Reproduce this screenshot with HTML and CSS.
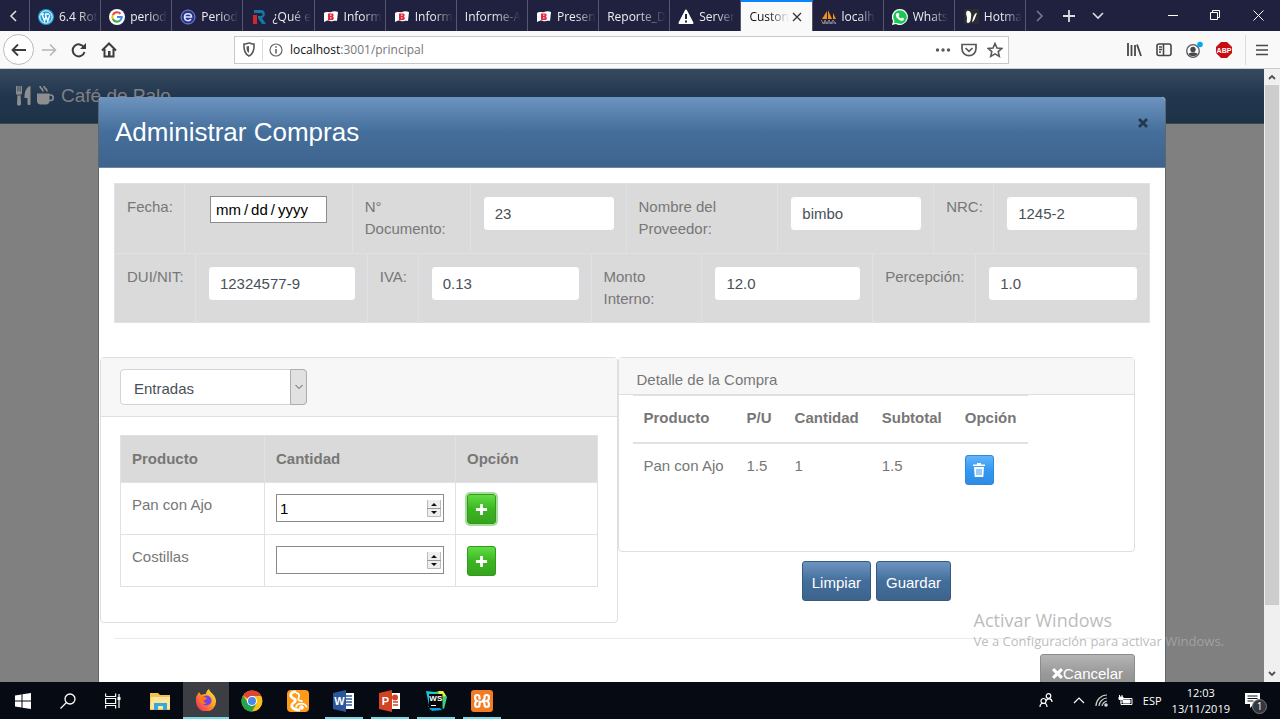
FILE: index.html
```html
<!DOCTYPE html>
<html lang="es">
<head>
<meta charset="utf-8">
<title>Administrar Compras</title>
<link rel="stylesheet" href="styles.css">
</head>
<body>
<svg class="defs" aria-hidden="true">
  <symbol id="b-flag" viewBox="0 0 16 16"><path d="M1 4c3-2 5 0 7-1s5-1 7 0l-1 9c-3-1-5 1-7 0s-4 0-6 1z" fill="#fff"/><path d="M5 4.500h4c2 0 2 2.500.8 3.200C11.500 8.500 11 11 9 11H5z" fill="#e8273f"/><path d="M7 6.200h1.500M7 8.900h1.500" stroke="#fff"/></symbol>
  <symbol id="plus" viewBox="0 0 14 14"><path d="M7 1v12M1 7h12" stroke="#fff" stroke-width="3"/></symbol>
  <symbol id="cross" viewBox="0 0 10 10"><path d="M1 1l8 8M9 1l-8 8" stroke="currentColor" stroke-width="2.800"/></symbol>
  <symbol id="spin" viewBox="0 0 14 17"><path d="M.5 0v16.500h13V0" fill="#eee" stroke="#bbb"/><path d="M0 8.500h14" stroke="#999"/><path d="M4 6l3-3 3 3zM4 11l3 3 3-3z" fill="#111"/></symbol>
</svg>

<nav class="tabs">
  <button class="tab-scroll" aria-label="Anterior"><svg width="8" height="12" viewBox="0 0 8 12"><path d="M7 1L2 6l5 5" fill="none" stroke="#ddd" stroke-width="1.600"/></svg></button>
  <div class="tab-list">
    <button class="tab"><svg class="fav" viewBox="0 0 16 16"><circle cx="8" cy="8" r="8" fill="#1e9fd6"/><circle cx="8" cy="8" r="6.200" fill="none" stroke="#fff"/><path d="M3 5h3M7 5h4M4 5l2.500 7L8 7.500 9.800 12 12 5.500M8 7.500L7.300 5" fill="none" stroke="#fff" stroke-width="1.400"/></svg><span>6.4 Rot</span></button>
    <button class="tab"><svg class="fav" viewBox="0 0 16 16"><circle cx="8" cy="8" r="8" fill="#fff"/><g fill="none" stroke-width="2"><path d="M11.500 4.800A4.700 4.700 0 0 0 3.800 6" stroke="#ea4335"/><path d="M3.800 6a4.700 4.700 0 0 0 0 4" stroke="#fbbc05"/><path d="M3.800 10a4.700 4.700 0 0 0 7.300 1.500" stroke="#34a853"/><path d="M11.100 11.500A4.700 4.700 0 0 0 12.700 8H8" stroke="#4285f4"/></g></svg><span>period</span></button>
    <button class="tab"><svg class="fav" viewBox="0 0 16 16"><circle cx="8" cy="8" r="7" fill="#27358c" stroke="#7c8cd2"/><path d="M4.500 8h7c0-4.500-7-4.500-7 0s5 4.500 6.500 2" fill="none" stroke="#dfe4ff" stroke-width="1.500"/></svg><span>Period</span></button>
    <button class="tab"><svg class="fav" viewBox="0 0 16 16"><path d="M3 1h7c5 0 5 7 1 8l4 6h-4L7 9V7h3c2 0 2-3 0-3H3z" fill="#1678a0"/><path d="M2 6h4v9H2z" fill="#d3242f"/></svg><span>¿Qué e</span></button>
    <button class="tab"><svg class="fav"><use href="#b-flag"/></svg><span>Inform</span></button>
    <button class="tab"><svg class="fav"><use href="#b-flag"/></svg><span>Inform</span></button>
    <button class="tab"><span>Informe-A</span></button>
    <button class="tab"><svg class="fav"><use href="#b-flag"/></svg><span>Presen</span></button>
    <button class="tab"><span>Reporte_D</span></button>
    <button class="tab"><svg class="fav" viewBox="0 0 16 16"><path d="M8 1.500L1.500 14h13z" fill="#fff" stroke="#fff" stroke-width="2" stroke-linejoin="round"/><path d="M8 5v5M8 11.500v2" stroke="#20213f" stroke-width="2"/></svg><span>Server</span></button>
    <button class="tab active"><span>Custon</span><svg class="tab-close" viewBox="0 0 10 10"><path d="M1 1l8 8M9 1L1 9" stroke="#333" stroke-width="1.300"/></svg></button>
    <button class="tab"><svg class="fav" viewBox="0 0 16 16"><path d="M1 10L6 2v8zM7 10V1l4 9zM12 10V4l3 6z" fill="#f29111"/><path d="M0 11l3 4 1-4 2 4 2-4 2 4 2-4 3 4M1 14h14" fill="none" stroke="#8a8a91"/></svg><span>localh</span></button>
    <button class="tab"><svg class="fav" viewBox="0 0 16 16"><path d="M8 0a8 8 0 1 1-4 15L0 16l1-4A8 8 0 0 1 8 0z" fill="#fff"/><path d="M8 1.200a6.800 6.800 0 1 1-3.700 12.500l-2.500.6.700-2.400A6.800 6.800 0 0 1 8 1.200z" fill="#1bc854"/><path d="M5 4l1.500 0 1 2-1 1c.5 1.200 1.300 2 2.600 2.500l1-1 2 1c0 2-1.600 2.600-3 2.200C6.500 11 4.500 9 4 7 3.800 5.500 4.300 4.500 5 4z" fill="#fff"/></svg><span>Whats</span></button>
    <button class="tab"><svg class="fav" viewBox="0 0 16 16"><path d="M1 0h15v15H1z" fill="#2d2d30"/><path d="M4 2c3-1 5 3 4 6 0 3-1 6-3 6s-1-3-1-5-2-5 0-7zM14 4c-2 0-3 2-4 5l-1 4c2 0 3-4 5-9z" fill="#fff"/></svg><span>Hotma</span></button>
  </div>
  <div class="tab-tools">
    <button aria-label="Siguiente"><svg width="8" height="12" viewBox="0 0 8 12"><path d="M1 1l5 5-5 5" fill="none" stroke="#77788e" stroke-width="1.600"/></svg></button>
    <button aria-label="Nueva pestaña"><svg width="14" height="14" viewBox="0 0 14 14"><path d="M7 1v12M1 7h12" stroke="#ddd" stroke-width="1.800"/></svg></button>
    <button aria-label="Lista de pestañas"><svg width="12" height="8" viewBox="0 0 12 8"><path d="M1 1l5 5 5-5" fill="none" stroke="#ddd" stroke-width="1.600"/></svg></button>
  </div>
  <div class="win-tools">
    <button aria-label="Minimizar"><svg width="10" height="10"><path d="M0 4.500h10" stroke="#fff"/></svg></button>
    <button aria-label="Restaurar"><svg width="11" height="11" fill="none" stroke="#fff"><path d="M.5 2.500h7v7h-7zM2.500 2.500v-2h7v7h-2"/></svg></button>
    <button aria-label="Cerrar"><svg width="11" height="11"><path d="M.5.5l10 10M10.500.5l-10 10" stroke="#fff"/></svg></button>
  </div>
</nav>

<header class="toolbar">
  <button class="back" aria-label="Atrás"><svg width="16" height="14" viewBox="0 0 16 14"><path d="M15 7H2M7 1.500L1.500 7 7 12.500" fill="none" stroke="#3c3c40" stroke-width="1.800"/></svg></button>
  <button aria-label="Adelante"><svg width="16" height="14" viewBox="0 0 16 14"><path d="M1 7h13M9 1.500L14.500 7 9 12.500" fill="none" stroke="#b5b5b8" stroke-width="1.500"/></svg></button>
  <button aria-label="Recargar"><svg width="16" height="16" viewBox="0 0 16 16"><path d="M13 5.500A6 6 0 1 0 13.500 10" fill="none" stroke="#3c3c40" stroke-width="2"/><path d="M15 1v6H9z" fill="#3c3c40"/></svg></button>
  <button aria-label="Inicio"><svg width="16" height="16" viewBox="0 0 16 16"><path d="M1 8.500L8 1.500l7 7M3.500 7v7.500h9V7" fill="none" stroke="#3c3c40" stroke-width="2"/><path d="M7 9h2.500v5H7z" fill="#3c3c40"/></svg></button>
  <div class="url">
    <svg width="14" height="15" viewBox="0 0 14 15"><path d="M2 2c3 0 3-1 5-1s2 1 5 1c.5 6-1 10-5 12C3 12 1.500 8 2 2z" fill="none" stroke="#58585c" stroke-width="1.600"/><path d="M7 4v7C4.500 9.500 4.500 7 4.500 4.500z" fill="#58585c"/></svg>
    <i class="url-line"></i>
    <svg width="14" height="14" viewBox="0 0 14 14"><circle cx="7" cy="7" r="6" fill="none" stroke="#68686c" stroke-width="1.200"/><path d="M7 6v4.500M7 3.300v1.500" stroke="#58585c" stroke-width="1.500"/></svg>
    <span class="address">localhost<em>:3001/principal</em></span>
    <svg width="16" height="16" viewBox="0 0 16 16" fill="#58585c"><circle cx="2.500" cy="8" r="1.700"/><circle cx="8" cy="8" r="1.700"/><circle cx="13.500" cy="8" r="1.700"/></svg>
    <svg width="16" height="14" viewBox="0 0 16 14" fill="none" stroke="#58585c" stroke-width="1.700"><path d="M1 1.500h14v4C15 15 1 15 1 5.500zM4.500 5L8 8.300 11.500 5"/></svg>
    <svg width="16" height="16" viewBox="0 0 16 16"><path d="M8 1.500l2 4.500 4.800.4-3.600 3.200 1.100 4.800L8 11.900l-4.300 2.500 1.100-4.800L1.200 6.400 6 6z" fill="none" stroke="#58585c" stroke-width="1.600"/></svg>
  </div>
  <div class="extras">
    <button aria-label="Biblioteca"><svg width="16" height="14" viewBox="0 0 16 14"><path d="M2 0v13M5.500 2v11M9 2v11M11 1.500l4 11.500" stroke="#48484c" stroke-width="1.800"/></svg></button>
    <button aria-label="Barra lateral"><svg width="16" height="14" viewBox="0 0 16 14" fill="none" stroke="#48484c" stroke-width="1.600"><rect x="1" y="1" width="14" height="11.500" rx="2"/><path d="M7.500 1v11.500M3 4h3M3 6.500h3M3 9h2"/></svg></button>
    <button aria-label="Cuenta"><svg width="18" height="18" viewBox="0 0 18 18"><circle cx="8" cy="10" r="6.300" fill="none" stroke="#58585c" stroke-width="1.300"/><circle cx="8" cy="8.500" r="2.700" fill="#48484c"/><path d="M3.500 13c1-2 8-2 9 0-2 3-7 3-9 0z" fill="#48484c"/><circle cx="15" cy="3.500" r="2.800" fill="#00a8f8"/></svg></button>
    <button aria-label="Adblock Plus"><svg width="16" height="16" viewBox="0 0 16 16"><path d="M5 0h6l5 5v6l-5 5H5l-5-5V5z" fill="#c70d12"/><text x="8" y="10.500" text-anchor="middle" class="abp">ABP</text></svg></button>
    <button class="menu" aria-label="Menú"><svg width="12" height="12"><path d="M0 1.500h12M0 6h12M0 10.500h12" stroke="#48484c" stroke-width="1.700"/></svg></button>
  </div>
</header>

<main class="viewport">
  <div class="page">
    <div class="navbar">
      <svg width="40" height="22" viewBox="0 0 40 22"><path d="M1 1v6.500c0 2 1 3 2.800 3S7 9.500 7 7.500V1H5.600v5.500h-.9V1H3.400v5.500h-.9V1zM2.500 9.500h3L6 19c0 2-4 2-4 0zM15.500 1v18c0 1.600-3 1.600-3 0v-6H9.500C9.500 7 11 2 15.500 1z" fill="#8e8e8e"/><path d="M22 8.500h12.500V16c0 2-1.500 3.500-3.500 3.500h-5.500c-2 0-3.500-1.500-3.500-3.500z" fill="#8e8e8e"/><path d="M34 10h1.800c3.200 0 3.200 5.500 0 5.500H34M25 1c0 3 3 2 3 5.500M29 1c0 3 3 2 3 5.500" fill="none" stroke="#8e8e8e" stroke-width="1.600"/></svg>
      <a class="brand" href="#">Café de Palo</a>
    </div>
    <section class="modal" role="dialog" aria-labelledby="title">
      <header class="modal-head">
        <h1 id="title">Administrar Compras</h1>
        <button class="close" aria-label="Cerrar"><svg width="10" height="10"><use href="#cross"/></svg></button>
      </header>
      <div class="modal-body">
        <form class="data">
          <div class="data-row first">
            <label for="fecha">Fecha:</label><div class="cell date-cell"><input class="date" id="fecha" type="date" lang="en-US"></div>
            <label for="doc">N°<br>Documento:</label><div class="cell"><input class="field" id="doc" type="text" value="23"></div>
            <label for="prov">Nombre del<br>Proveedor:</label><div class="cell"><input class="field" id="prov" type="text" value="bimbo"></div>
            <label for="nrc">NRC:</label><div class="cell"><input class="field" id="nrc" type="text" value="1245-2"></div>
          </div>
          <div class="data-row second">
            <label for="dui">DUI/NIT:</label><div class="cell"><input class="field" id="dui" type="text" value="12324577-9"></div>
            <label for="iva">IVA:</label><div class="cell"><input class="field" id="iva" type="text" value="0.13"></div>
            <label for="monto">Monto<br>Interno:</label><div class="cell"><input class="field" id="monto" type="text" value="12.0"></div>
            <label for="perc">Percepción:</label><div class="cell"><input class="field" id="perc" type="text" value="1.0"></div>
          </div>
        </form>

        <div class="cards">
          <section class="card products">
            <div class="card-head">
              <div class="picker"><select aria-label="Categoría"><option>Entradas</option></select><span class="picker-arrow"><svg width="8" height="6"><path d="M.5 1L4 4.500 7.500 1" fill="none" stroke="#555"/></svg></span></div>
            </div>
            <div class="card-body">
              <table class="grid">
                <thead><tr><th class="c-prod">Producto</th><th class="c-qty">Cantidad</th><th>Opción</th></tr></thead>
                <tbody>
                  <tr><td>Pan con Ajo</td><td><div class="number"><input type="number" value="1" aria-label="Cantidad de Pan con Ajo"><svg width="14" height="17"><use href="#spin"/></svg></div></td><td><button class="btn add focus" aria-label="Agregar Pan con Ajo"><svg width="13" height="13"><use href="#plus"/></svg></button></td></tr>
                  <tr><td>Costillas</td><td><div class="number"><input type="number" aria-label="Cantidad de Costillas"><svg width="14" height="17"><use href="#spin"/></svg></div></td><td><button class="btn add" aria-label="Agregar Costillas"><svg width="13" height="13"><use href="#plus"/></svg></button></td></tr>
                </tbody>
              </table>
            </div>
          </section>
          <div class="detail">
            <section class="card summary">
              <h2 class="card-title">Detalle de la Compra</h2>
              <table class="lines">
                <thead><tr><th>Producto</th><th>P/U</th><th>Cantidad</th><th>Subtotal</th><th>Opción</th></tr></thead>
                <tbody><tr><td>Pan con Ajo</td><td>1.5</td><td>1</td><td>1.5</td><td><button class="btn remove" aria-label="Eliminar"><svg width="12" height="14" viewBox="0 0 12 14"><path d="M0 1.500h4V0h4v1.500h4V3H0zM1 4h10l-.7 10H1.700z" fill="#fff"/><path d="M4 6v6M6 6v6M8 6v6" stroke="#3399f3"/></svg></button></td></tr></tbody>
              </table>
            </section>
            <div class="actions"><button class="btn primary">Limpiar</button><button class="btn primary">Guardar</button></div>
          </div>
        </div>
        <footer class="modal-foot"><button class="btn cancel"><svg width="11" height="11"><use href="#cross"/></svg>Cancelar</button></footer>
      </div>
    </section>
  </div>
  <div class="scrollbar">
    <svg width="8" height="6"><path d="M1 5l3-3 3 3" fill="none" stroke="#505050" stroke-width="1.800"/></svg>
    <i class="thumb"></i><i class="rest"></i>
    <svg width="8" height="6"><path d="M1 1l3 3 3-3" fill="none" stroke="#505050" stroke-width="1.800"/></svg>
  </div>
  <div class="watermark"><strong>Activar Windows</strong><span>Ve a Configuración para activar Windows.</span></div>
</main>

<footer class="taskbar">
  <div class="apps">
    <button aria-label="Inicio"><svg width="16" height="16" viewBox="0 0 16 16" fill="#fff"><path d="M0 2.500l6.500-1v6H0zM7.500 1.300L16 0v7.500H7.500zM0 8.500h6.500v6L0 13.500zM7.500 8.500H16V16l-8.500-1.300z"/></svg></button>
    <button aria-label="Buscar"><svg width="16" height="16" viewBox="0 0 16 16" fill="none" stroke="#fff" stroke-width="1.300"><circle cx="10" cy="6" r="5"/><path d="M6.500 9.500L.5 15.500"/></svg></button>
    <button aria-label="Vista de tareas"><svg width="16" height="16" viewBox="0 0 16 16" fill="none" stroke="#fff" stroke-width="1.200"><path d="M.6 3.500v-3M.6 3.500h10v-3M.6 5.500h10v5H.6zM.6 15.500v-3h10v3M14 1v14"/><path d="M14 4v3" stroke-width="3"/></svg></button>
    <button class="files" aria-label="Explorador"><svg width="22" height="20" viewBox="0 0 22 20"><path d="M1 2h8l2 2h10v15H1z" fill="#f2c34e"/><path d="M2 6h19v12H1z" fill="#fee59a"/><path d="M5 19v-7h13v7h-4v-4H9v4z" fill="#35a8dc"/></svg></button>
    <button class="current" aria-label="Firefox"><svg width="22" height="22" viewBox="0 0 22 22"><defs><linearGradient id="fx" x1="1" y1="0" x2="0" y2="1"><stop offset="0" stop-color="#fff34d"/><stop offset=".45" stop-color="#ff9a1f"/><stop offset="1" stop-color="#f5156c"/></linearGradient></defs><path d="M1 8l3-5 2 3c2-1 3-1 5-1 0-2 1-4 3-5 1 4 7 6 7 12a10 10 0 0 1-20 1c0-2 0-3 0-5z" fill="url(#fx)"/><circle cx="11.500" cy="11.500" r="5" fill="#7542e5"/><path d="M5 8c3-1 5 0 7 1-1 2-3 2-4 3 1 1 2 1.500 3.500 1.500-1 2-4 2-5.500.5-1.500-1.500-2-4-1-6z" fill="#ff7a1a"/></svg></button>
    <button aria-label="Chrome"><svg width="22" height="22" viewBox="0 0 22 22"><circle cx="11" cy="11" r="10.500" fill="#fbc116"/><path d="M11 11L2 5.500A10.500 10.500 0 0 1 20.300 6H11z" fill="#df4536"/><path d="M2 5.500A10.500 10.500 0 0 0 11 21.500l4.500-8L7 13z" fill="#2aa14c"/><circle cx="11" cy="11" r="5" fill="#fff"/><circle cx="11" cy="11" r="4" fill="#4a87ee"/></svg></button>
    <button aria-label="UC Browser"><svg width="22" height="22" viewBox="0 0 22 22"><rect width="22" height="22" rx="4" fill="#ff9a17"/><path d="M9 2C5 1 2 5 5 7.500 7 9 10 9.500 7.500 12 5 14 4 15 5 17c1.500 2.500 4 3 8 3" fill="none" stroke="#fff" stroke-width="2.800"/><path d="M9 3c3 0 4 2.500 2.500 5-1 2 1 3 4 3M19.500 17.500c0-5-10-5.500-10.500 0" fill="none" stroke="#fff" stroke-width="1.800"/><circle cx="14.500" cy="17.500" r="2.300" fill="#fff"/></svg></button>
    <button class="open" aria-label="Word"><svg width="22" height="22" viewBox="0 0 22 22"><path d="M11 3h10v16H11z" fill="#fff"/><path d="M13 6h6M13 9h6M13 12h6M13 15h6" stroke="#2b579a" stroke-width="1.500"/><path d="M0 3l13-3v22L0 19z" fill="#2b579a"/><text class="office" x="6.500" y="15" text-anchor="middle">W</text></svg></button>
    <button class="open" aria-label="PowerPoint"><svg width="22" height="22" viewBox="0 0 22 22"><path d="M11 3h10v16H11z" fill="#fff"/><path d="M14 12h5M14 15h5" stroke="#d04424" stroke-width="1.500"/><circle cx="16" cy="7.500" r="3" fill="#d04424"/><path d="M0 3l13-3v22L0 19z" fill="#d04424"/><text class="office" x="6.500" y="15" text-anchor="middle">P</text></svg></button>
    <button class="open" aria-label="WebStorm"><svg width="22" height="22" viewBox="0 0 22 22"><path d="M1 1l9 1 4 8-9 10z" fill="#16c7da"/><path d="M9 2l9-1 4 6-3 12-8-4z" fill="#3bd17a"/><path d="M13 1l5 0 3 5-6 1z" fill="#f5ee3b"/><path d="M3 16l9-1 5 5-10 1z" fill="#0aa0df"/><path d="M4 4h13.500v14H4z" fill="#060606"/><text class="ws" x="10.800" y="11" text-anchor="middle">WS</text><path d="M6 15.500h5" stroke="#fff"/></svg></button>
    <button class="open" aria-label="XAMPP"><svg width="22" height="22" viewBox="0 0 22 22"><rect width="22" height="22" rx="3" fill="#f37b22"/><path d="M8.500 9.500V7.200a2.200 2.200 0 0 0-4.400 0V8c0 1.500.9 2.500 2.200 3-1.300.5-2.200 1.500-2.200 3v.8a2.200 2.200 0 0 0 4.400 0v-1c0-1.500 1-2.300 2.500-2.300s2.500.8 2.500 2.300v1a2.200 2.200 0 0 0 4.400 0V14c0-1.500-.9-2.500-2.200-3 1.300-.5 2.200-1.500 2.200-3v-.8a2.200 2.200 0 0 0-4.400 0v1c0 1.500-1 2.300-2.500 2.300" fill="none" stroke="#fff" stroke-width="2.200"/></svg></button>
  </div>
  <div class="tray">
    <svg width="14" height="15" viewBox="0 0 14 15" fill="none" stroke="#fff" stroke-width="1.200"><circle cx="9.500" cy="3" r="2.300"/><path d="M7 8c1-3 6-3 6 1"/><circle cx="4.500" cy="8" r="2.500"/><path d="M1 14c0-5 7-5 7 0"/></svg>
    <svg class="chevron" width="12" height="7" viewBox="0 0 12 7"><path d="M1 6l5-5 5 5" fill="none" stroke="#fff" stroke-width="1.200"/></svg>
    <svg width="13" height="13" viewBox="0 0 13 13" fill="none" stroke="#ccc" stroke-width="1.200"><path d="M1 12C1 6 6 1 12 1M4 12c0-4 4-8 8-8M7 12c0-2 3-5 5-5"/><circle cx="11" cy="11" r="1.200" fill="#fff"/></svg>
    <svg width="15" height="12" viewBox="0 0 15 12"><path d="M5 3.500h9v6H3v-3" fill="none" stroke="#fff"/><path d="M5 5h7v3H5zM1 2h4v2.500H1zM1.500 0v2M4 0v2M3 4v4" fill="#fff" stroke="#fff"/></svg>
    <span>ESP</span>
    <span class="clock">12:03<br>13/11/2019</span>
    <span class="notice"><svg width="16" height="15" viewBox="0 0 16 15"><path d="M0 0h15v11H9l-4 4v-4H0z" fill="#fff"/><path d="M2.500 3h10M2.500 5.500h10M2.500 8h6" stroke="#10131a"/></svg><b>1</b></span>
  </div>
</footer>
</body>
</html>
```
FILE: styles.css
```css
* { box-sizing: border-box; }
html, body { height: 100%; }
body {
  margin: 0;
  display: flex;
  flex-direction: column;
  overflow: hidden;
  color: #777;
  font: 15px/22px "Liberation Sans", Arial, sans-serif;
}
button, input, select { font: inherit; color: inherit; margin: 0; }
button { border: 0; padding: 0; background: none; }
svg { flex: none; display: block; }
.defs { position: absolute; width: 0; height: 0; }

/* Tab strip */
.tabs {
  display: flex;
  flex: none;
  height: 31px;
  background: #20213f;
  color: #eee;
  font: 12px/16px "Open Sans", "Noto Sans", sans-serif;
}
.tabs button { display: flex; align-items: center; justify-content: center; }
.tab-scroll { width: 30px; padding-right: 4px; border-right: 1px solid #55566f; }
.tab-list { flex: 1; display: grid; grid-template-columns: repeat(14, 1fr); }
.tabs .tab {
  min-width: 0;
  justify-content: flex-start;
  gap: 5px;
  padding: 2px 0 0 8px;
  border-right: 1px solid #55566f;
}
.tab span {
  text-align: left;
  white-space: nowrap;
  mask-image: linear-gradient(to right, #000 50%, transparent);
}
.fav { width: 16px; height: 16px; }
.tabs .tab.active {
  justify-content: space-between;
  gap: 0;
  padding: 0 10px 0 8px;
  background: #f9f9fa;
  color: #111;
  border-top: 2px solid #0a84ff;
}
.tab-close { width: 10px; height: 10px; }
.tab-tools { display: flex; width: 86px; }
.tab-tools button { flex: 1; }
.win-tools { display: flex; width: 168px; padding-left: 39px; }
.win-tools button { flex: 1; }

/* Navigation bar */
.toolbar {
  display: flex;
  flex: none;
  align-items: center;
  height: 38px;
  padding: 0 5px 0 3px;
  background: #f9f9fa;
  border-bottom: 1px solid #ccc;
}
.toolbar button { display: flex; align-items: center; justify-content: center; width: 30px; height: 30px; }
.toolbar .back { width: 31px; height: 31px; border: 1px solid #bbb; border-radius: 50%; background: #fff; }
.url {
  flex: 1;
  display: flex;
  align-items: center;
  gap: 10px;
  height: 28px;
  margin: 0 110px;
  padding: 0 5px 0 7px;
  border: 1px solid #c8c8c8;
  background: #fff;
  font: 12px/16px "Open Sans", "Noto Sans", sans-serif;
  color: #111;
}
.url-line { width: 1px; height: 22px; margin: 0 -4px 0 -4px; background: #ddd; }
.address { flex: 1; margin-left: -3px; }
.address em { font-style: normal; color: #777; }
.extras { display: flex; }
.extras .menu { margin-left: 6px; padding-left: 2px; border-left: 1px solid #ddd; }
.abp { font: bold 7px "Liberation Sans", sans-serif; fill: #fff; }

/* Page area */
.viewport { flex: 1; min-height: 0; display: flex; position: relative; }
.page { flex: 1; position: relative; overflow: hidden; background: #808080; }
.navbar {
  display: flex;
  align-items: center;
  gap: 6px;
  height: 55px;
  padding-left: 15px;
  background: linear-gradient(#364a5f, #22374f 50%, #1e3246);
  border-bottom: 1px solid #3c4650;
}
.brand { color: #808080; font-size: 19px; text-decoration: none; }
.scrollbar {
  width: 16px;
  display: flex;
  flex-direction: column;
  align-items: center;
  padding: 5px 0;
  background: #f0f0f0;
}
.thumb { flex: 521; width: 14px; margin-top: 5px; background: #cdcdcd; }
.rest { flex: 66; }

/* Dialog */
.modal {
  position: absolute;
  top: 28px;
  left: 0;
  right: 0;
  width: calc(100% - 64px);
  max-width: 1068px;
  min-height: 620px;
  margin: 0 auto;
  background: #fff;
  border: 1px solid #5e6670;
  border-top: 0;
  border-radius: 4px 4px 0 0;
}
.modal-head {
  display: flex;
  justify-content: space-between;
  align-items: flex-start;
  height: 71px;
  padding: 21px 17px 0 16px;
  color: #fff;
  background: linear-gradient(#6d94bf, #446e9b 50%, #3e648d);
  border-bottom: 1px solid #6d86a3;
  border-radius: 4px 4px 0 0;
}
.modal-head h1 { margin: 0; font-size: 26px; line-height: 28px; font-weight: 400; }
.close { color: #24384f; }
.modal-body { padding: 15px 15px 0; }

.data { background: #dadada; border: 1px solid #dee2e6; border-width: 1px 0 1px 1px; }
.data-row { display: grid; height: 69px; }
.data-row + .data-row { border-top: 1px solid #dee2e6; }
.first { grid-template-columns: 70fr 168fr 118fr 156fr 152fr 156fr 60fr 156fr; }
.second { grid-template-columns: 81fr 172fr 51fr 173fr 111fr 171fr 103fr 174fr; }
.data-row > * { min-width: 0; padding: 12px 11px 0 12px; border-right: 1px solid #dee2e6; }
.data-row > label { padding-right: 0; white-space: nowrap; }
.data-row > .date-cell { padding-left: 25px; }
.field {
  display: block;
  width: 100%;
  height: 35px;
  padding: 0 11px;
  color: #495057;
  background: #fff;
  border: 1px solid #d4dae0;
  border-radius: 4px;
}
.date {
  display: block;
  width: 117px;
  height: 27px;
  padding: 0 4px;
  color: #000;
  background: #fff;
  border: 1px solid #8b8b93;
}
.date::-webkit-calendar-picker-indicator { display: none; }
.date::-webkit-datetime-edit-text { padding: 0 2px; }

/* Cards */
.cards { display: grid; grid-template-columns: 1fr 1fr; align-items: start; margin: 34px 15px 0 -14px; }
.card { border: 1px solid #dfdfdf; border-radius: 4px; }
.card-head { padding: 11px 19px; background: #f7f7f7; border-bottom: 1px solid #dfdfdf; }
.picker { position: relative; width: 187px; height: 36px; }
.picker select {
  width: 100%;
  height: 100%;
  padding: 3px 24px 0 13px;
  appearance: none;
  color: #495057;
  background: #fff;
  border: 1px solid #ced4da;
  border-radius: 4px;
}
.picker-arrow {
  position: absolute;
  top: 0;
  right: 0;
  width: 17px;
  height: 100%;
  display: flex;
  align-items: center;
  justify-content: center;
  background: #e1e1e1;
  border: 1px solid #adadad;
  border-radius: 0 4px 4px 0;
  pointer-events: none;
}
.card-body { padding: 18px 19px 35px; }
table { border-collapse: collapse; }
th, td { padding: 11px; text-align: left; vertical-align: top; }
.grid { width: 100%; table-layout: fixed; }
.grid th, .grid td { border: 1px solid #dee2e6; }
.grid th { height: 47px; padding-top: 12px; background: #dadada; }
.grid td { height: 52px; padding-bottom: 8px; }
.c-prod { width: 144px; }
.c-qty { width: 191px; }
.number {
  display: flex;
  align-items: center;
  height: 28px;
  padding-right: 2px;
  border: 1px solid #8a8a8a;
  background: #fff;
}
.number input {
  flex: 1;
  min-width: 0;
  height: 100%;
  padding: 0 3px;
  border: 0;
  color: #000;
  background: none;
  appearance: textfield;
}
.btn {
  display: flex;
  align-items: center;
  justify-content: center;
  color: #fff;
  border-radius: 3px;
}
.add, .remove { width: 29px; height: 30px; }
.add { background: linear-gradient(#61dd45, #3cb521 50%, #36a41e); border: 1px solid #319a1b; }
.add.focus { box-shadow: 0 0 0 2px #a7dd9b; }
.remove { background: linear-gradient(#62b4fb, #3399f3 50%, #2e8ce2); border: 1px solid #2e8ade; }
.summary { height: 195px; }
.card-title {
  height: 37px;
  margin: 0;
  padding: 11px 18px 0;
  font-size: 15px;
  font-weight: 400;
  background: #f7f7f7;
  border-bottom: 1px solid #dfdfdf;
}
.lines { margin-left: 14px; }
.lines th, .lines td { padding-right: 12px; }
.lines th { height: 47px; border-top: 1px solid #dee2e6; border-bottom: 2px solid #dee2e6; }
.actions { display: flex; justify-content: flex-end; gap: 5px; margin: 9px 184px 0 0; }
.primary {
  height: 40px;
  padding: 3px 9px 0;
  background: linear-gradient(#6d94bf, #446e9b 50%, #3e648d);
  border: 1px solid #355a82;
}
.modal-foot {
  display: flex;
  justify-content: flex-end;
  margin-top: 15px;
  padding: 15px 15px 0;
  border-top: 1px solid #e9ecef;
}
.cancel {
  height: 39px;
  padding: 0 11px;
  background: linear-gradient(#b5b5b5, #999 50%, #8c8c8c);
  border: 1px solid #8c8c8c;
}
.watermark {
  position: absolute;
  right: 56px;
  bottom: 31px;
  display: flex;
  flex-direction: column;
  color: rgba(170, 170, 170, .8);
  font: 13px/20px "Open Sans", "Noto Sans", sans-serif;
  pointer-events: none;
}
.watermark strong { font-size: 18px; line-height: 22px; font-weight: 400; }

/* Taskbar */
.taskbar {
  flex: none;
  display: flex;
  justify-content: space-between;
  height: 37px;
  background: #060a12;
  color: #fff;
  font: 11px/16px "Open Sans", "Noto Sans", sans-serif;
}
.apps { display: flex; }
.apps button { position: relative; display: flex; align-items: center; justify-content: center; width: 46px; }
.apps button:nth-child(-n+3) { width: 45px; }
.apps .files { margin-left: 2px; }
.apps .current { background: #3c3e43; border-bottom: 2px solid #76d9e6; }
.apps .open::after { content: ""; position: absolute; left: 4px; right: 4px; bottom: 0; height: 2px; background: #76d9e6; }
.office { font: bold 11px "Liberation Sans", sans-serif; fill: #fff; }
.ws { font: bold 8px "Liberation Sans", sans-serif; fill: #fff; }
.tray { display: flex; align-items: center; gap: 10px; padding-right: 11px; }
.chevron { margin-left: 10px; }
.clock { text-align: center; }
.notice { position: relative; margin: 0 8px 0 5px; }
.notice b {
  position: absolute;
  left: 7px;
  top: 6px;
  width: 15px;
  height: 15px;
  border: 1px solid #777;
  border-radius: 50%;
  background: #33363c;
  font-size: 10px;
  line-height: 13px;
  font-weight: 400;
  text-align: center;
}
```
